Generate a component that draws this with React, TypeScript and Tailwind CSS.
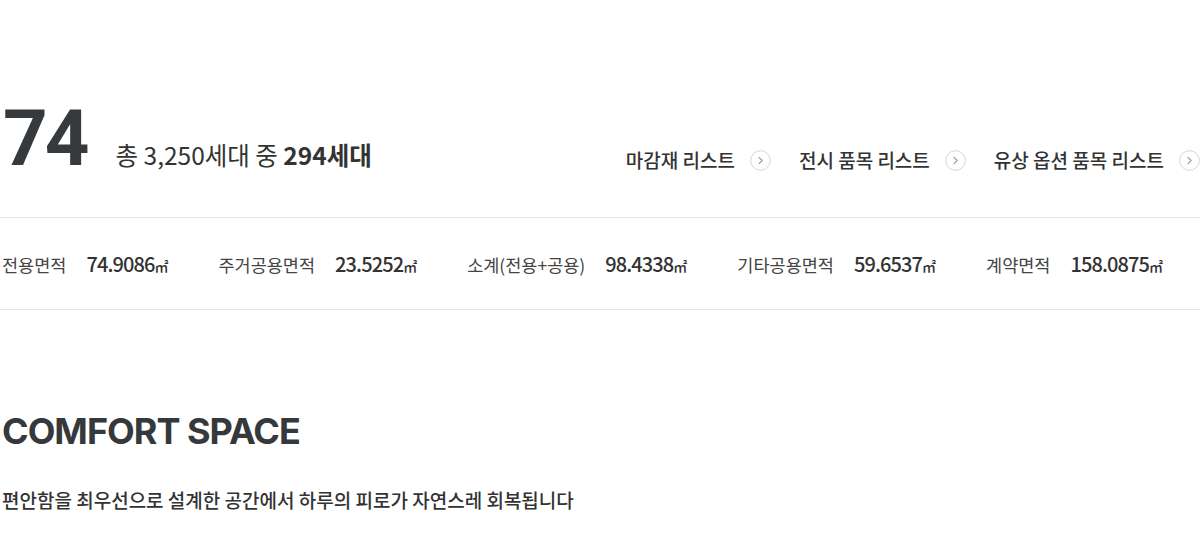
import React from "react";

const KR = { fontFamily: '"Noto Sans CJK KR", "Noto Sans", sans-serif' };

function CircleArrow() {
  return (
    <svg width="21" height="21" viewBox="0 0 21 21" className="shrink-0">
      <circle cx="10.5" cy="10.5" r="9.8" fill="none" stroke="#d4d4d4" strokeWidth="1" />
      <path d="M9 7.3 L12.2 10.5 L9 13.7" fill="none" stroke="#9a9a9a" strokeWidth="1.1" strokeLinecap="round" strokeLinejoin="round" />
    </svg>
  );
}

const links = ["마감재 리스트", "전시 품목 리스트", "유상 옵션 품목 리스트"];

const areas = [
  { label: "전용면적", value: "74.9086" },
  { label: "주거공용면적", value: "23.5252" },
  { label: "소계(전용+공용)", value: "98.4338" },
  { label: "기타공용면적", value: "59.6537" },
  { label: "계약면적", value: "158.0875" },
];

export default function App() {
  return (
    <div className="w-[1200px] h-[549px] bg-white overflow-hidden text-[#333]" style={KR}>
      <div className="pt-[100px] pb-[39px] border-b border-[#e6e6e6] flex items-baseline justify-between">
        <div className="flex items-baseline">
          <span
            className="text-[78px] leading-none font-bold text-[#363a3d] tracking-[-3px] pl-[3px]"
            style={{ fontFamily: 'Roboto, "Noto Sans", sans-serif' }}
          >
            74
          </span>
          <span className="ml-[29px] text-[24.5px] leading-none text-[#333]">
            총 3,250세대 중 <b className="font-bold">294세대</b>
          </span>
        </div>
        <div className="flex items-baseline gap-[28px] translate-y-[3px]">
          {links.map((l) => (
            <div key={l} className="inline-flex items-center gap-[15px]">
              <span className="text-[19px] leading-[22px] font-medium text-[#333]">{l}</span>
              <CircleArrow />
            </div>
          ))}
        </div>
      </div>

      <div className="h-[92px] border-b border-[#e6e6e6] flex items-center gap-[50px] pl-[2px]">
        {areas.map((a) => (
          <div key={a.label} className="flex items-baseline gap-[20px]">
            <span className="text-[17.5px] text-[#444] leading-none">{a.label}</span>
            <span className="text-[20px] font-medium text-[#333] tracking-[-0.9px] leading-none">
              {a.value}
              <span className="text-[14px] tracking-normal">㎡</span>
            </span>
          </div>
        ))}
      </div>

      <h2
        className="mt-[103px] text-[36px] leading-none font-bold text-[#36393c] tracking-[-1px] pl-[2px]"
        style={{ fontFamily: 'Inter, "Noto Sans", sans-serif' }}
      >
        COMFORT SPACE
      </h2>
      <p className="mt-[41px] text-[19px] leading-[19px] font-medium text-[#333] pl-[2px]">
        편안함을 최우선으로 설계한 공간에서 하루의 피로가 자연스레 회복됩니다
      </p>
    </div>
  );
}
